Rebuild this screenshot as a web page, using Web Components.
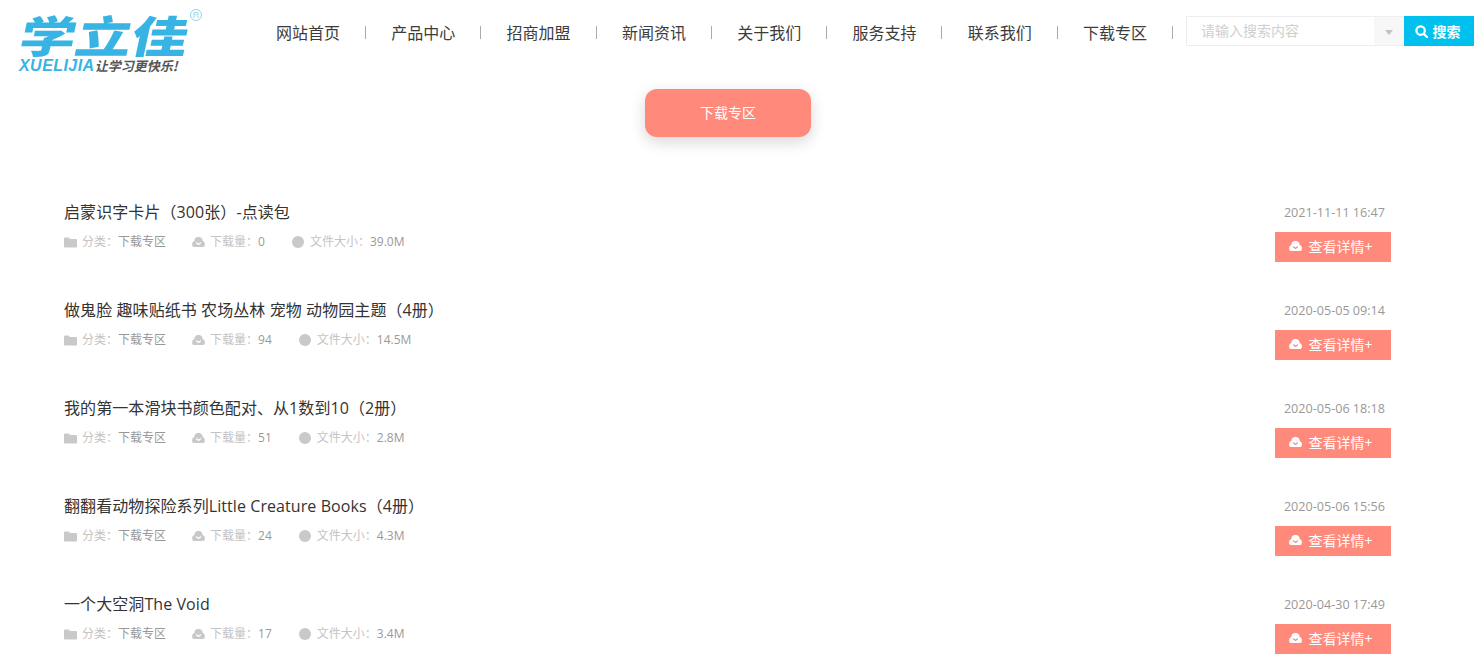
<!DOCTYPE html>
<html lang="zh">
<head>
<meta charset="utf-8">
<title>下载专区</title>
<style>
html, body { margin: 0; padding: 0; background: #fff; }
body { font-family: "Open Sans", "Noto Sans CJK SC", sans-serif; height: 658px; overflow: hidden; }
</style>
</head>
<body>
<site-header></site-header>
<page-title>下载专区</page-title>
<download-list>
  <download-item name="启蒙识字卡片（300张）-点读包" count="0" size="39.0M" date="2021-11-11 16:47"></download-item>
  <download-item name="做鬼脸 趣味贴纸书 农场丛林 宠物 动物园主题（4册）" count="94" size="14.5M" date="2020-05-05 09:14"></download-item>
  <download-item name="我的第一本滑块书颜色配对、从1数到10（2册）" count="51" size="2.8M" date="2020-05-06 18:18"></download-item>
  <download-item name="翻翻看动物探险系列Little Creature Books（4册）" count="24" size="4.3M" date="2020-05-06 15:56"></download-item>
  <download-item name="一个大空洞The Void" count="17" size="3.4M" date="2020-04-30 17:49"></download-item>
</download-list>

<script>
const CLOUD = '<svg viewBox="0 0 14 11" width="13" height="10"><path fill="currentColor" d="M2.4 4.4A4.6 4.6 0 0 1 11.6 4.4 3.2 3.2 0 0 1 14 7.4V9A2 2 0 0 1 12 11H2A2 2 0 0 1 0 9V7.4A3.2 3.2 0 0 1 2.4 4.4Z"/><path fill="var(--cut,#fff)" d="M4.2 5.4 7 7.2 9.8 5.4V6.8L7 9 4.2 6.8Z"/></svg>';

const headerTemplate = document.createElement('template');
headerTemplate.innerHTML = `
<style>
:host { display: flex; height: 78px; padding: 0 10px 0 18px; box-sizing: border-box; }
.logo { width: 258px; flex: none; position: relative; color: #37b4e4; }
.logo .mark {
    display: block; margin-top: 10px; font: 900 56px/62px "Noto Sans CJK SC", sans-serif;
    transform: skewX(-12deg) scaleY(.78); transform-origin: 0 0; width: 170px;
    color: #37b4e4; white-space: nowrap; padding-left: 8px;
}
.logo .sub { display: flex; align-items: baseline; position: absolute; left: 1px; top: 58px; white-space: nowrap; }
.logo .en { font: italic 700 16px/16px "Liberation Sans", sans-serif; color: #37b4e4; letter-spacing: .45px; }
.logo .cn { font: italic 700 13px/16px "Noto Sans CJK SC", sans-serif; color: #555; }
.logo .reg { position: absolute; left: 172px; top: 9px; font-family: "Liberation Sans", sans-serif; color: #8fd5f0;
    border: 1px solid #8fd5f0; border-radius: 50%; width: 10px; height: 10px; font-size: 9px; line-height: 10px; text-align: center; }
ul { display: grid; grid-template-columns: repeat(8, 115.3px); margin: 0; padding: 0; list-style: none; flex: none; width: 910px; height: 64px; align-items: center; }
li { display: flex; align-items: center; color: #3c3c3c; font-size: 16px; white-space: nowrap; }
li span { width: 89px; flex: none; }
li i { width: 1px; height: 13px; background: #aaa; }
nav-search { margin-top: 16px; }
</style>
<div class="logo">
  <span class="mark">学立佳</span>
  <span class="reg">R</span>
  <div class="sub"><span class="en">XUELIJIA</span><span class="cn">让学习更快乐!</span></div>
</div>
<ul>
  <li><span>网站首页</span><i></i></li>
  <li><span>产品中心</span><i></i></li>
  <li><span>招商加盟</span><i></i></li>
  <li><span>新闻资讯</span><i></i></li>
  <li><span>关于我们</span><i></i></li>
  <li><span>服务支持</span><i></i></li>
  <li><span>联系我们</span><i></i></li>
  <li><span>下载专区</span><i></i></li>
</ul>
<nav-search></nav-search>
`;

class SiteHeader extends HTMLElement {
    connectedCallback() {
        this.attachShadow({ mode: 'open' }).appendChild(headerTemplate.content.cloneNode(true));
    }
}

const searchTemplate = document.createElement('template');
searchTemplate.innerHTML = `
<style>
:host { display: flex; height: 30px; width: 288px; font-size: 14px; }
.box { flex: 1; display: flex; justify-content: space-between; border: 1px solid #eee; border-right: 0; box-sizing: border-box; }
.box span { padding-left: 14px; line-height: 27px; color: #cfcfcf; }
.arrow { width: 30px; background: #f7f7f7; display: flex; align-items: center; justify-content: center; }
.arrow b { margin-top: 3px; border: 4px solid transparent; border-top: 5px solid #c2c2c2; border-bottom: 0; }
.go { width: 70px; box-sizing: border-box; padding-right: 3px; background: #00c1ee; color: #fff; font-weight: 700; display: flex; align-items: center; justify-content: center; gap: 5px; }
svg { display: block; }
</style>
<div class="box"><span>请输入搜索内容</span><div class="arrow"><b></b></div></div>
<div class="go">
  <svg width="13" height="13" viewBox="0 0 13 13"><circle cx="5.6" cy="5.6" r="4.2" fill="none" stroke="#fff" stroke-width="2.2"/><path d="M8.8 8.8 12 12" stroke="#fff" stroke-width="2.4" stroke-linecap="round"/></svg>
  <span>搜索</span>
</div>
`;

class NavSearch extends HTMLElement {
    connectedCallback() {
        this.attachShadow({ mode: 'open' }).appendChild(searchTemplate.content.cloneNode(true));
    }
}

const titleTemplate = document.createElement('template');
titleTemplate.innerHTML = `
<style>
:host { display: flex; justify-content: center; padding: 11px 28px 0 0; height: 111px; }
div { width: 166px; height: 48px; box-sizing: border-box; padding-bottom: 2px; border-radius: 12px; background: #ff8a7b; color: #fff; font-size: 14px; display: flex; align-items: center; justify-content: center; box-shadow: 0 5px 15px rgba(0,0,0,.16); }
</style>
<div><slot></slot></div>
`;

class PageTitle extends HTMLElement {
    connectedCallback() {
        this.attachShadow({ mode: 'open' }).appendChild(titleTemplate.content.cloneNode(true));
    }
}

const listTemplate = document.createElement('template');
listTemplate.innerHTML = `
<style>
:host { display: flex; flex-direction: column; padding: 0 93px 0 64px; gap: 38px; }
</style>
<slot></slot>
`;

class DownloadList extends HTMLElement {
    connectedCallback() {
        this.attachShadow({ mode: 'open' }).appendChild(listTemplate.content.cloneNode(true));
    }
}

const itemTemplate = document.createElement('template');
itemTemplate.innerHTML = `
<style>
:host { display: flex; justify-content: space-between; height: 60px; }
h3 { margin: 0; font-size: 16px; font-weight: 400; color: #333; line-height: 24px; height: 32px; letter-spacing: .08px; }
.meta { display: flex; align-items: center; font-size: 12px; color: #c4c4c4; line-height: 20px; }
.meta b { font-weight: 400; color: #999; }
.meta span { display: flex; align-items: center; }
.meta svg { margin-right: 5px; flex: none; color: #c9c9c9; --cut: #fff; }
.meta .cat { margin-right: 26px; }
.meta .cnt { margin-right: 27px; }
.right { display: flex; flex-direction: column; align-items: flex-end; }
time { font-size: 12.6px; color: #999; line-height: 25px; height: 32px; padding-right: 6px; flex: none; }
a { width: 116px; height: 30px; box-sizing: border-box; padding: 0 4px 2px 0; flex: none; background: #ff8a7b; color: #fff; font-size: 14px; display: flex; align-items: center; justify-content: center; gap: 6px; --cut: #ff8a7b; }
</style>
<div>
  <h3></h3>
  <div class="meta">
    <span class="cat"><svg width="13" height="11" viewBox="0 0 13 11"><path fill="currentColor" d="M0 1.5A1 1 0 0 1 1 .5H4.5L6 2H12A1 1 0 0 1 13 3V9.5A1 1 0 0 1 12 10.5H1A1 1 0 0 1 0 9.5Z"/></svg>分类：<b>下载专区</b></span>
    <span class="cnt"><i class="cloud"></i>下载量：<b class="count"></b></span>
    <span><svg width="12" height="12" viewBox="0 0 12 12" style="margin-right:6px"><circle cx="6" cy="6" r="6" fill="currentColor"/></svg>文件大小：<b class="size"></b></span>
  </div>
</div>
<div class="right">
  <time></time>
  <a><i class="cloud"></i><span>查看详情+</span></a>
</div>
`;

class DownloadItem extends HTMLElement {
    connectedCallback() {
        const root = this.attachShadow({ mode: 'open' });
        root.appendChild(itemTemplate.content.cloneNode(true));
        root.querySelector('h3').textContent = this.getAttribute('name');
        root.querySelector('.count').textContent = this.getAttribute('count');
        root.querySelector('.size').textContent = this.getAttribute('size');
        root.querySelector('time').textContent = this.getAttribute('date');
        root.querySelectorAll('.cloud').forEach(c => { c.outerHTML = CLOUD; });
    }
}

customElements.define('nav-search', NavSearch);
customElements.define('site-header', SiteHeader);
customElements.define('page-title', PageTitle);
customElements.define('download-list', DownloadList);
customElements.define('download-item', DownloadItem);
</script>
</body>
</html>
